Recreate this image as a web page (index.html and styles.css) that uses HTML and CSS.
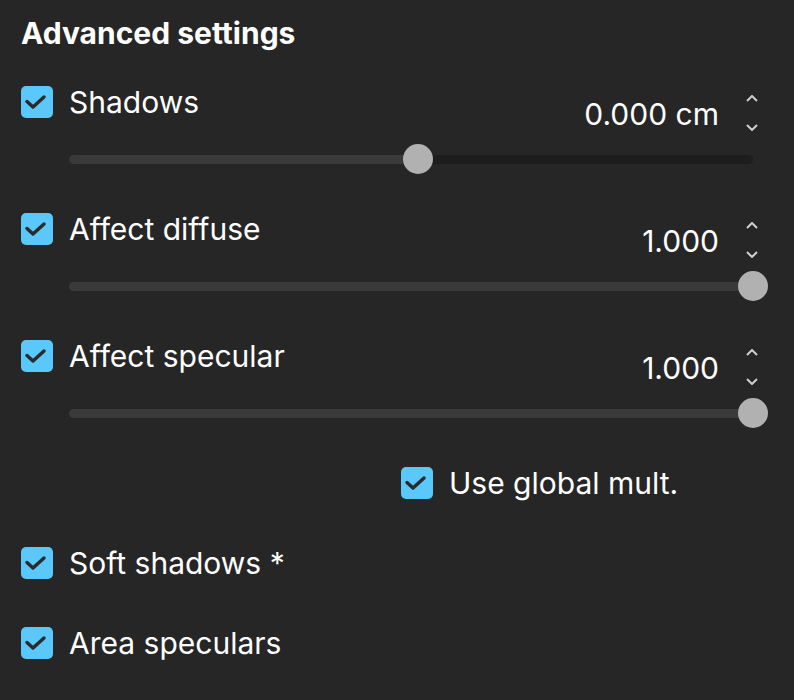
FILE: index.html
```html
<!DOCTYPE html>
<html lang="en">
<head>
    <meta charset="UTF-8">
    <meta name="viewport" content="width=device-width, initial-scale=1.0">
    <title>Advanced settings</title>
    <link rel="stylesheet" href="styles.css">
</head>
<body>
    <div class="panel">
        <h2 class="heading">Advanced settings</h2>

        <div class="slider-row">
            <div class="row-header">
                <label class="check">
                    <span class="box"><svg viewBox="0 0 32 32"><path d="M6 15.5l6 5.5 11-10"/></svg></span>
                    <span class="label">Shadows</span>
                </label>
                <div class="value-group">
                    <span class="value">0.000 cm</span>
                    <span class="spinner">
                        <svg viewBox="0 0 12 7"><path d="M1 6l5-5 5 5"/></svg>
                        <svg viewBox="0 0 12 7"><path d="M1 1l5 5 5-5"/></svg>
                    </span>
                </div>
            </div>
            <div class="slider">
                <div class="track"><div class="fill" style="width: 51%"></div></div>
                <div class="thumb" style="left: 51%"></div>
            </div>
        </div>

        <div class="slider-row">
            <div class="row-header">
                <label class="check">
                    <span class="box"><svg viewBox="0 0 32 32"><path d="M6 15.5l6 5.5 11-10"/></svg></span>
                    <span class="label">Affect diffuse</span>
                </label>
                <div class="value-group">
                    <span class="value">1.000</span>
                    <span class="spinner">
                        <svg viewBox="0 0 12 7"><path d="M1 6l5-5 5 5"/></svg>
                        <svg viewBox="0 0 12 7"><path d="M1 1l5 5 5-5"/></svg>
                    </span>
                </div>
            </div>
            <div class="slider">
                <div class="track"><div class="fill" style="width: 100%"></div></div>
                <div class="thumb" style="left: 100%"></div>
            </div>
        </div>

        <div class="slider-row">
            <div class="row-header">
                <label class="check">
                    <span class="box"><svg viewBox="0 0 32 32"><path d="M6 15.5l6 5.5 11-10"/></svg></span>
                    <span class="label">Affect specular</span>
                </label>
                <div class="value-group">
                    <span class="value">1.000</span>
                    <span class="spinner">
                        <svg viewBox="0 0 12 7"><path d="M1 6l5-5 5 5"/></svg>
                        <svg viewBox="0 0 12 7"><path d="M1 1l5 5 5-5"/></svg>
                    </span>
                </div>
            </div>
            <div class="slider">
                <div class="track"><div class="fill" style="width: 100%"></div></div>
                <div class="thumb" style="left: 100%"></div>
            </div>
        </div>

        <label class="check sub-option">
            <span class="box"><svg viewBox="0 0 32 32"><path d="M6 15.5l6 5.5 11-10"/></svg></span>
            <span class="label">Use global mult.</span>
        </label>

        <label class="check option">
            <span class="box"><svg viewBox="0 0 32 32"><path d="M6 15.5l6 5.5 11-10"/></svg></span>
            <span class="label">Soft shadows *</span>
        </label>

        <label class="check option">
            <span class="box"><svg viewBox="0 0 32 32"><path d="M6 15.5l6 5.5 11-10"/></svg></span>
            <span class="label">Area speculars</span>
        </label>
    </div>
</body>
</html>
```

FILE: styles.css
```css
body {
    margin: 0;
    padding: 0;
    font-family: Inter, "Noto Sans", sans-serif;
    background-color: #262626;
    color: #ffffff;
}
.panel {
    padding: 16px 41px 0 21px;
}
.heading {
    margin: 0 0 35px 0;
    font-size: 30px;
    line-height: 34px;
    font-weight: 700;
}

/* checkbox + label */
.check {
    display: flex;
    align-items: center;
    height: 34px;
    font-size: 30px;
    line-height: 34px;
}
.box {
    width: 32px;
    height: 32px;
    border-radius: 5px;
    background-color: #5ac8fa;
    margin-right: 16px;
    flex-shrink: 0;
}
.box svg {
    display: block;
    width: 32px;
    height: 32px;
}
.box path {
    fill: none;
    stroke: #2b2b2b;
    stroke-width: 3.5;
    stroke-linecap: round;
    stroke-linejoin: round;
}

/* slider rows */
.slider-row {
    margin-bottom: 38px;
}
.row-header {
    display: flex;
    justify-content: space-between;
    align-items: flex-start;
    height: 45px;
}
.value-group {
    display: flex;
    align-items: center;
    margin-top: 11px;
    margin-right: -5px;
}
.value {
    font-size: 30px;
    line-height: 34px;
}
.spinner {
    display: flex;
    flex-direction: column;
    gap: 22px;
    margin-left: 27px;
    margin-top: -1px;
}
.spinner svg {
    display: block;
    width: 12px;
    height: 7px;
}
.spinner path {
    fill: none;
    stroke: #cfcfcf;
    stroke-width: 2;
}
.slider {
    position: relative;
    height: 30px;
    margin: 14px 0 0 48px;
    display: flex;
    align-items: center;
}
.track {
    width: 100%;
    height: 9px;
    border-radius: 5px;
    background-color: #1d1d1d;
    overflow: hidden;
}
.fill {
    height: 100%;
    background-color: #3a3a3a;
}
.thumb {
    position: absolute;
    top: 0;
    width: 30px;
    height: 30px;
    margin-left: -15px;
    border-radius: 50%;
    background-color: #b1b1b1;
}

.sub-option {
    margin-left: 380px;
    margin-bottom: 46px;
}
.option {
    margin-bottom: 46px;
}
```
